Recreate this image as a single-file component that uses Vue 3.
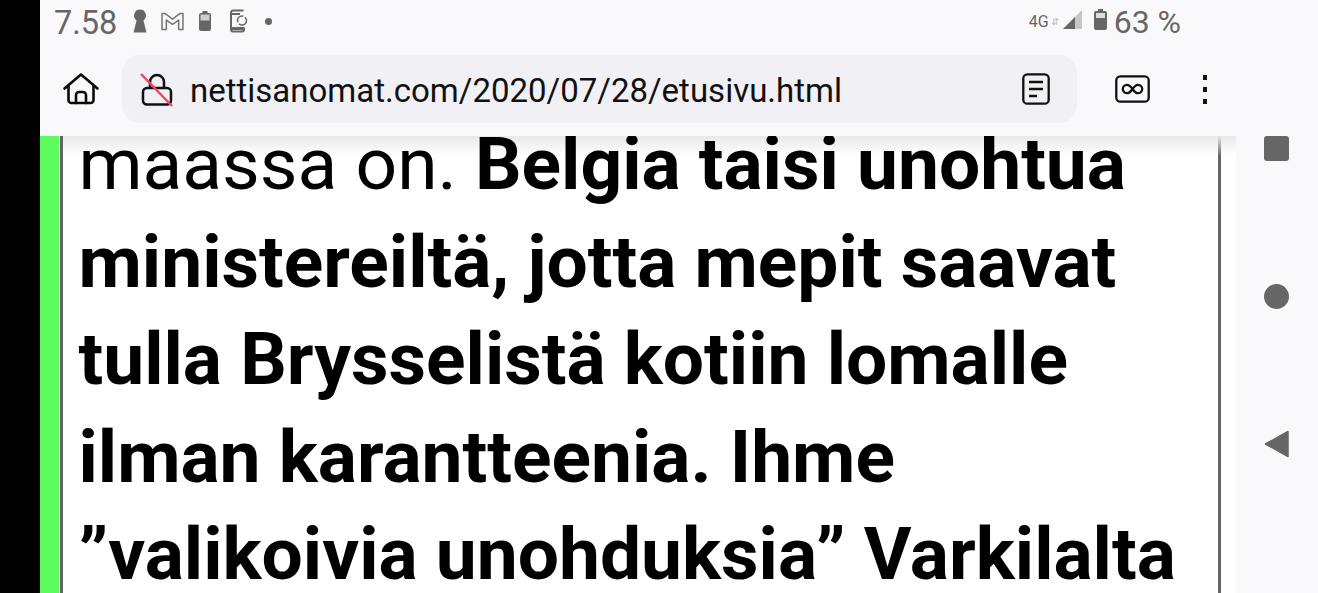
<script setup>
const lines = [
  'ministereiltä, jotta mepit saavat',
  'tulla Brysselistä kotiin lomalle',
  'ilman karantteenia. Ihme',
  '”valikoivia unohduksia” Varkilalta'
]
</script>

<template>
  <div class="screen">
    <div class="black-bar"></div>
    <div class="main">
      <header class="top">
        <div class="status">
          <div class="status-left">
            <span class="clock">7.58</span>
            <svg class="ic-key" width="14" height="24" viewBox="0 0 14 24"><path d="M7 .5a6 6 0 0 1 3.400 10.900L13.500 23.500H.5L3.600 11.400A6 6 0 0 1 7 .5z" fill="#666"/></svg>
            <svg class="ic-mail" width="25" height="19" viewBox="0 0 26 20" fill="none" stroke="#777" stroke-width="1.600" stroke-linejoin="round"><path d="M2 1.500h3l8 6 8-6h3v17h-4.500V8.500L13 13 6.500 8.500v10H2z"/></svg>
            <svg class="ic-batt" width="14" height="22" viewBox="0 0 14 22"><rect x="1" y="3" width="12" height="18" rx="2" fill="#666"/><rect x="4.500" y="1" width="5" height="3" fill="#666"/><rect x="2.500" y="4.500" width="9" height="6" fill="#ccc"/></svg>
            <svg class="ic-phone" width="20" height="24" viewBox="0 0 20 24" fill="none"><path d="M14.500 1.500H4a2 2 0 0 0-2 2v17a2 2 0 0 0 2 2h9a2 2 0 0 0 2-2v-2" stroke="#666" stroke-width="2"/><path d="M2 18h13v3H2z" fill="#666"/><path d="M2 5h9" stroke="#666" stroke-width="2"/><circle cx="13" cy="11.500" r="4.500" stroke="#666" stroke-width="1.500" stroke-dasharray="10 2"/></svg>
            <span class="dot"></span>
          </div>
          <div class="status-right">
            <span class="net">4G</span>
            <span class="arrows">⇵</span>
            <svg class="ic-signal" width="21" height="21" viewBox="0 0 21 21"><path d="M20 1v19H1z" fill="#c6c6c6"/><path d="M13 8v12H1z" fill="#666"/></svg>
            <svg class="ic-batt2" width="15" height="23" viewBox="0 0 15 23"><rect x="1" y="3" width="13" height="19" rx="2" fill="#666"/><rect x="5" y="1" width="5" height="3" fill="#666"/><rect x="3" y="5" width="9" height="5" fill="#ddd"/></svg>
            <span class="pct">63 %</span>
          </div>
        </div>
        <div class="toolbar">
          <svg class="home" width="38" height="34" viewBox="0 0 38 34" fill="none" stroke="#0b0b0b" stroke-width="2.600" stroke-linejoin="round" stroke-linecap="round"><path d="M2.500 16.500L19 2.500l16.500 14"/><path d="M6.500 14v14a3 3 0 0 0 3 3h19a3 3 0 0 0 3-3V14"/><path d="M14 31v-8a3 3 0 0 1 3-3h4a3 3 0 0 1 3 3v8"/></svg>
          <div class="url-box">
            <svg class="lock" width="34" height="36" viewBox="0 0 34 36" fill="none"><path d="M10 16V10a7 7 0 0 1 14 0v6" stroke="#111" stroke-width="2.500"/><rect x="3" y="16" width="28" height="16.500" rx="4" stroke="#111" stroke-width="2.500"/><path d="M1 2l31 32" stroke="#f0455f" stroke-width="2.500"/></svg>
            <span class="url">nettisanomat.com/2020/07/28/etusivu.html</span>
            <svg class="reader" width="28" height="32" viewBox="0 0 28 32" fill="none" stroke="#111"><rect x="1.300" y="1.300" width="25.400" height="29.400" rx="4" stroke-width="2.300"/><path d="M7 9h14M7 16h14M7 23h8" stroke-width="2.300"/></svg>
          </div>
          <svg class="tabs" width="35" height="28" viewBox="0 0 35 28" fill="none" stroke="#111"><rect x="1.300" y="1.300" width="32.400" height="25.400" rx="4" stroke-width="2.300"/><path d="M17.500 14c-2-3-3.500-4.200-5.500-4.200a4.200 4.200 0 0 0 0 8.400c2 0 3.500-1.200 5.500-4.200c2-3 3.500-4.200 5.500-4.200a4.200 4.200 0 0 1 0 8.400c-2 0-3.500-1.200-5.500-4.200z" stroke-width="2.300"/></svg>
          <div class="menu"><i></i><i></i><i></i></div>
        </div>
      </header>
      <div class="below">
        <div class="page">
          <div class="green"></div>
          <article class="article">
            <div class="shade"></div>
            <p class="text"><span class="regular">maassa on. </span><b>Belgia taisi unohtua</b></p>
            <p v-for="line in lines" :key="line" class="text"><b>{{ line }}</b></p>
          </article>
        </div>
        <nav class="nav">
          <span class="square"></span>
          <span class="circle"></span>
          <svg class="back" width="26" height="28" viewBox="0 0 26 28"><path d="M24 1.500v25L1.500 14z" fill="#666" stroke="#666" stroke-width="1.500" stroke-linejoin="round"/></svg>
        </nav>
      </div>
    </div>
  </div>
</template>

<style scoped>
.screen {
  display: flex;
  width: 1318px;
  height: 593px;
  overflow: hidden;
  background: #000;
  font-family: Roboto, sans-serif;
}

.black-bar {
  width: 40px;
  flex: none;
  background: #000;
}

.main {
  flex: 1;
  display: flex;
  flex-direction: column;
  min-width: 0;
  background: #f9f9fc;
}

.top {
  height: 136px;
  flex: none;
  position: relative;
  z-index: 2;
}

.status {
  height: 42px;
  padding: 0 137px 0 14px;
  display: flex;
  justify-content: space-between;
  align-items: center;
  color: #666;
}

.status-left,
.status-right {
  display: flex;
  align-items: center;
}

.clock {
  font-size: 32.500px;
  width: 79px;
  margin-top: 3px;
}

.ic-key { margin-right: 13px; }
.ic-mail { margin-right: 13px; }
.ic-batt { margin-right: 17px; }
.ic-phone { margin-right: 16px; }

.dot {
  width: 7px;
  height: 7px;
  border-radius: 50%;
  background: #666;
}

.net {
  font-size: 16px;
}

.arrows {
  font-size: 10px;
  color: #bbb;
  margin: 0 3px 0 2px;
}

.ic-signal {
  margin-top: -3px;
}

.ic-batt2 {
  margin: -3px 6px 0 10px;
}

.pct {
  font-size: 32px;
  margin-top: 2px;
}

.toolbar {
  height: 68px;
  margin: 13px 82px 0 0;
  display: flex;
  align-items: center;
}

.home {
  margin-left: 22px;
}

.url-box {
  width: 955px;
  height: 68px;
  margin-left: 22px;
  border-radius: 18px;
  background: #f0f0f5;
  display: flex;
  align-items: center;
  padding: 0 27px 0 18px;
  box-sizing: border-box;
}

.lock {
  margin-top: 2px;
}

.url {
  flex: 1;
  margin: 2px 0 0 16px;
  font-size: 33px;
  color: #111;
  white-space: nowrap;
}

.tabs {
  margin-left: 38px;
}

.menu {
  margin-left: 53px;
  display: flex;
  flex-direction: column;
  gap: 7px;
}

.menu i {
  display: block;
  width: 4px;
  height: 5px;
  background: #111;
}

.below {
  flex: 1;
  display: flex;
  min-height: 0;
}

.page {
  flex: 1;
  display: flex;
  background: #fff;
  overflow: hidden;
}

.green {
  width: 19px;
  flex: none;
  margin-right: 1px;
  background: #5efc5e;
}

.article {
  position: relative;
  width: 1161px;
  box-sizing: border-box;
  height: 600px;
  padding: 0 0 0 15.500px;
  border-left: 3px solid #666;
  border-right: 3px solid #666;
  background: #fff;
}

.shade {
  position: absolute;
  left: 0;
  right: -18px;
  top: 0;
  height: 20px;
  background: linear-gradient(#e9e9e9, rgba(255, 255, 255, 0));
}

.text {
  position: relative;
  margin: 0;
  font-size: 73.100px;
  line-height: 97.500px;
  color: #000;
  white-space: nowrap;
}

.text:first-of-type {
  margin-top: -20px;
}

.text b {
  font-weight: 700;
}

.regular {
  font-weight: 400;
}

.nav {
  width: 82px;
  box-sizing: border-box;
  padding-right: 1px;
  flex: none;
  display: flex;
  flex-direction: column;
  align-items: center;
  gap: 122px;
}

.square {
  width: 25px;
  height: 25px;
  border-radius: 3px;
  background: #666;
}

.circle {
  width: 25px;
  height: 25px;
  margin-top: 1px;
  margin-bottom: -1px;
  border-radius: 50%;
  background: #666;
}
</style>
